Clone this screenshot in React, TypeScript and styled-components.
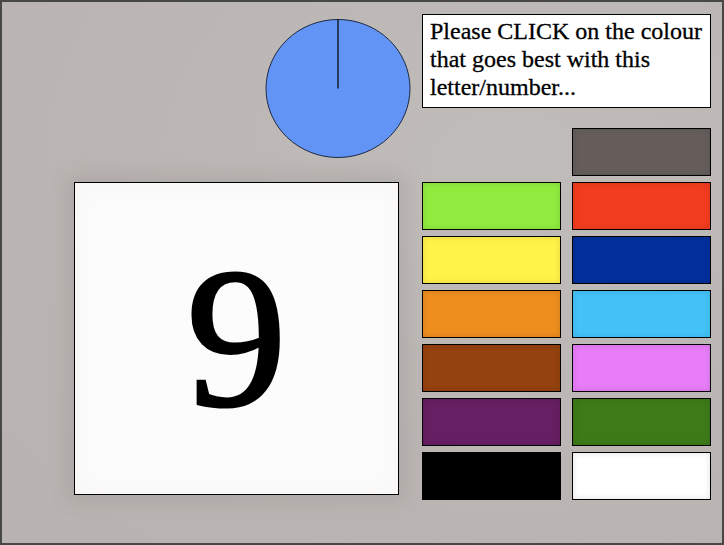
import React from "react";
import styled, { createGlobalStyle } from "styled-components";

const Global = createGlobalStyle`
  html, body { margin: 0; padding: 0; background: #bbb6b3; }
  * { box-sizing: border-box; }
`;

const Frame = styled.div`
  width: 724px;
  height: 545px;
  border: 2px solid #474747;
  background: radial-gradient(ellipse at 70% 30%, #c0bcb9 0%, #bbb6b3 55%, #b8b3b0 100%);
  display: flex;
  font-family: "Liberation Serif", "Times New Roman", serif;
  color: #000;
`;

const LeftColumn = styled.div`
  width: 409px;
  display: flex;
  flex-direction: column;
  align-items: flex-start;
  padding-top: 16px;
`;

const Timer = styled.svg`
  display: block;
  margin-left: 263px;
  width: 146px;
  height: 140px;
`;

const Card = styled.div`
  margin-top: 24px;
  margin-left: 72px;
  width: 325px;
  height: 313px;
  border: 1px solid #000;
  background: #fdfcfc;
  box-shadow: 0 0 18px 6px rgba(120, 112, 108, 0.2), inset 0 0 24px rgba(210, 206, 204, 0.15);
  display: flex;
  align-items: center;
  justify-content: center;
  font-size: 200px;
  line-height: 1;
  -webkit-text-stroke: 3px #000;
  padding-bottom: 2px;
`;

const RightColumn = styled.div`
  margin-left: 11px;
  padding-top: 12px;
  display: flex;
  flex-direction: column;
`;

const Prompt = styled.div`
  width: 289px;
  height: 94px;
  border: 1px solid #000;
  background: #fff;
  padding: 2px 7px 6px 7px;
  font-size: 24px;
  line-height: 28px;
  -webkit-text-stroke: 0.3px #000;
`;

const Palette = styled.div`
  margin-top: 20px;
  display: grid;
  grid-template-columns: 139px 139px;
  grid-auto-rows: 48px;
  column-gap: 11px;
  row-gap: 6px;
`;

const Swatch = styled.div<{ $c: string }>`
  border: 1px solid #000;
  background: ${(p) => p.$c};
  box-shadow: inset 0 0 6px rgba(0, 0, 0, 0.12);
  cursor: pointer;
`;

const Empty = styled.div``;

const colours = [
  null,
  "#645d59",
  "#8fec3f",
  "#f23c1f",
  "#fff34a",
  "#022f9c",
  "#ee8e1f",
  "#43c3f8",
  "#94420f",
  "#e87df8",
  "#661f63",
  "#3d7a18",
  "#000000",
  "#ffffff",
];

export default function App() {
  return (
    <>
      <Global />
      <Frame>
        <LeftColumn>
          <Timer viewBox="0 0 146 140">
            <ellipse cx="73" cy="70.5" rx="72" ry="69" fill="#6194f4" stroke="#1e2a44" strokeWidth="1" />
            <line x1="73" y1="70.5" x2="73" y2="1.5" stroke="#000" strokeWidth="1.2" />
          </Timer>
          <Card>9</Card>
        </LeftColumn>
        <RightColumn>
          <Prompt>Please CLICK on the colour that goes best with this letter/number...</Prompt>
          <Palette>
            {colours.map((c, i) => (c ? <Swatch key={i} $c={c} /> : <Empty key={i} />))}
          </Palette>
        </RightColumn>
      </Frame>
    </>
  );
}
